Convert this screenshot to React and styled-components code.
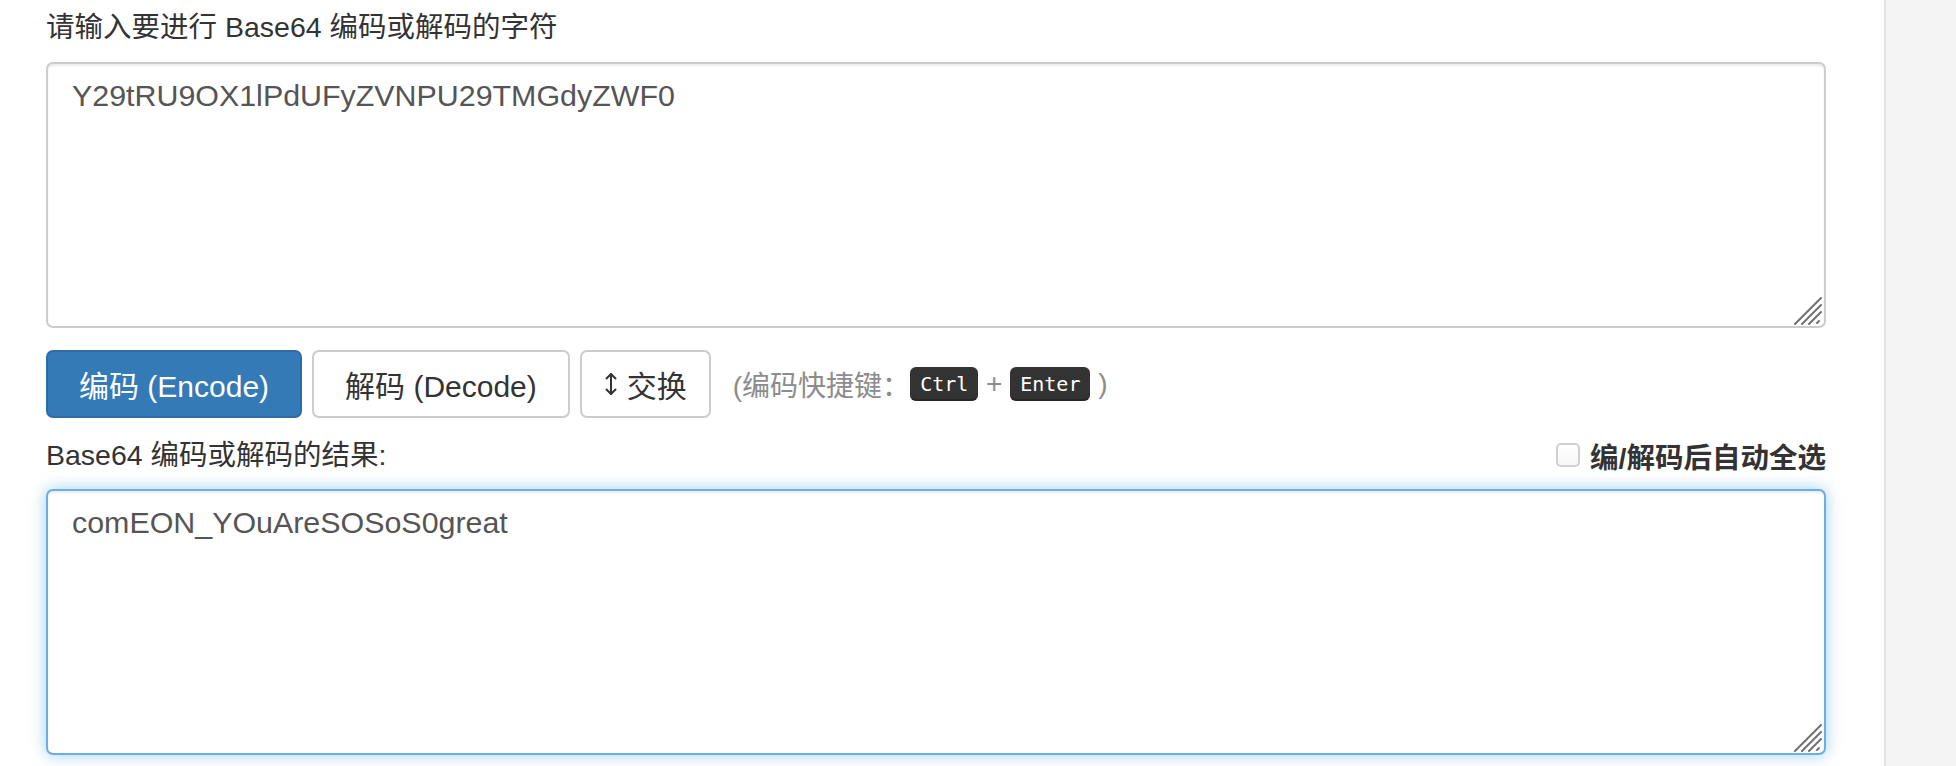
import React from "react";
import styled, { createGlobalStyle } from "styled-components";

const GlobalStyle = createGlobalStyle`
  html, body {
    margin: 0;
    padding: 0;
    background: #fff;
  }
  body {
    font-family: "Liberation Sans", "Noto Sans CJK SC", sans-serif;
    color: #333;
  }
`;

const Page = styled.div`
  display: flex;
  height: 100vh;
  overflow: hidden;
`;

const Main = styled.div`
  flex: 1;
  display: flex;
  flex-direction: column;
  padding: 7px 58px 0 46px;
  background: #fff;
`;

const Side = styled.div`
  width: 72px;
  box-sizing: border-box;
  border-left: 2px solid #e3e3e3;
  background: #f4f4f4;
`;

const Label = styled.div`
  font-size: 28.5px;
  line-height: 40px;
  color: #333;
  margin-bottom: ${(p) => p.$mb || 0}px;
`;

const TextareaWrap = styled.div`
  position: relative;
  height: 266px;
`;

const Area = styled.textarea`
  display: block;
  width: 100%;
  height: 100%;
  box-sizing: border-box;
  padding: 11px 24px;
  border: 2px solid ${(p) => (p.$focused ? "#66afe9" : "#ccc")};
  border-radius: 7px;
  background: #fff;
  color: #555;
  font-family: "Liberation Sans", "Noto Sans CJK SC", sans-serif;
  font-size: 30.4px;
  line-height: 40px;
  resize: none;
  outline: none;
  box-shadow: ${(p) =>
    p.$focused
      ? "inset 0 2px 2px rgba(0,0,0,.075), 0 0 16px rgba(102,175,233,.6)"
      : "inset 0 2px 2px rgba(0,0,0,.075)"};
`;

const Grip = styled.svg`
  position: absolute;
  right: 4px;
  bottom: 3px;
  pointer-events: none;
`;

const ButtonRow = styled.div`
  display: flex;
  align-items: center;
  gap: 10px;
  margin-top: 22px;
`;

const Button = styled.button`
  display: inline-flex;
  align-items: center;
  height: 68px;
  box-sizing: border-box;
  padding: 0 ${(p) => p.$pad || 31}px;
  border: 2px solid ${(p) => (p.$primary ? "#2e6da4" : "#ccc")};
  border-radius: 7px;
  background: ${(p) => (p.$primary ? "#337ab7" : "#fff")};
  color: ${(p) => (p.$primary ? "#fff" : "#333")};
  font-family: "Liberation Sans", "Noto Sans CJK SC", sans-serif;
  font-size: 30px;
  white-space: pre;
  cursor: pointer;
`;

const SwapIcon = styled.svg`
  margin-right: 9px;
  flex: none;
`;

const Hint = styled.div`
  display: flex;
  align-items: center;
  margin-left: 12px;
  font-size: 28px;
  color: #8c8c8c;
  white-space: pre;
`;

const Kbd = styled.kbd`
  display: inline-block;
  padding: 4px 10px;
  border-radius: 6px;
  background: #333;
  color: #fff;
  font-family: "DejaVu Sans Mono", "Liberation Mono", monospace;
  font-size: 20px;
  line-height: 26px;
  box-shadow: inset 0 -2px 0 rgba(0, 0, 0, 0.25);
`;

const ResultRow = styled.div`
  display: flex;
  justify-content: space-between;
  align-items: center;
  height: 40px;
  margin: 17px 0 14px;
`;

const CheckLabel = styled.label`
  display: flex;
  align-items: center;
  gap: 10px;
  font-size: 28.5px;
  font-weight: bold;
  color: #333;
`;

const CheckBox = styled.input`
  appearance: none;
  margin: 0;
  width: 24px;
  height: 24px;
  box-sizing: border-box;
  border: 2px solid #d0d0d0;
  border-radius: 5px;
  background: linear-gradient(#fff, #f7f7f7);
`;

function ResizeGrip() {
  return (
    <Grip width="28" height="28" viewBox="0 0 28 28">
      <g stroke="#707070" strokeWidth="2" strokeLinecap="round">
        <line x1="1" y1="27" x2="27" y2="1" />
        <line x1="8" y1="27" x2="27" y2="8" />
        <line x1="15" y1="27" x2="27" y2="15" />
        <line x1="23" y1="26" x2="25" y2="24" />
      </g>
    </Grip>
  );
}

function App() {
  return (
    <Page>
      <GlobalStyle />
      <Main>
        <Label $mb={15}>请输入要进行 Base64 编码或解码的字符</Label>
        <TextareaWrap>
          <Area defaultValue="Y29tRU9OX1lPdUFyZVNPU29TMGdyZWF0" />
          <ResizeGrip />
        </TextareaWrap>

        <ButtonRow>
          <Button $primary>编码 (Encode)</Button>
          <Button>解码 (Decode)</Button>
          <Button $pad={22}>
            <SwapIcon width="14" height="24" viewBox="0 0 14 24">
              <g fill="none" stroke="#333" strokeWidth="2" strokeLinecap="round" strokeLinejoin="round">
                <line x1="7" y1="2" x2="7" y2="22" />
                <polyline points="2.5,6.5 7,2 11.5,6.5" />
                <polyline points="2.5,17.5 7,22 11.5,17.5" />
              </g>
            </SwapIcon>
            交换
          </Button>
          <Hint>
            (编码快捷键：<Kbd>Ctrl</Kbd> + <Kbd>Enter</Kbd> )
          </Hint>
        </ButtonRow>

        <ResultRow>
          <Label>Base64 编码或解码的结果:</Label>
          <CheckLabel>
            <CheckBox type="checkbox" />
            编/解码后自动全选
          </CheckLabel>
        </ResultRow>

        <TextareaWrap>
          <Area $focused defaultValue="comEON_YOuAreSOSoS0great" />
          <ResizeGrip />
        </TextareaWrap>
      </Main>
      <Side />
    </Page>
  );
}

export default App;
